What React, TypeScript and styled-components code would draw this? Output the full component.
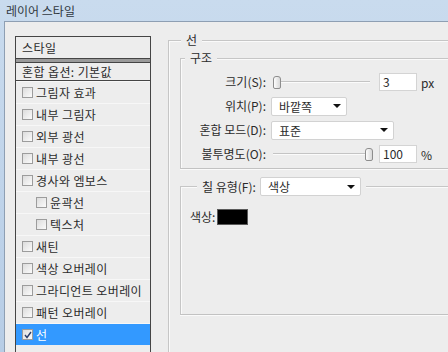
import React from 'react';
import styled, { createGlobalStyle } from 'styled-components';

const FONT = '"Noto Sans CJK KR", "Noto Sans", sans-serif';

const GlobalStyle = createGlobalStyle`
  html, body { margin: 0; padding: 0; background: #ededed; }
  body { font-family: ${FONT}; font-size: 12px; color: #2b2b2b; }
`;

const Window = styled.div`
  width: 448px;
  height: 352px;
  overflow: hidden;
  background: linear-gradient(to bottom, #c9dbee, #b7cde6);
  display: flex;
  flex-direction: column;
`;

const TitleBar = styled.div`
  height: 21px;
  flex: none;
  display: flex;
  align-items: center;
  padding-left: 6px;
  font-size: 12px;
  color: #303840;
`;

const Body = styled.div`
  flex: 1;
  margin-left: 4px;
  background: #ededed;
  border-left: 1px solid #8e9fb3;
  border-top: 1px solid #8e9fb3;
  display: flex;
  padding: 14px 0 0 10px;
  min-height: 0;
`;

const StyleList = styled.div`
  width: 134px;
  flex: none;
  border: 1px solid #454545;
  border-bottom: none;
  background: #ededed;
  display: flex;
  flex-direction: column;
  letter-spacing: 0.4px;
`;

const ListHeader = styled.div`
  height: 21px;
  display: flex;
  align-items: center;
  padding-left: 6px;
  border-bottom: 1px solid #454545;
`;

const ListBar = styled.div`
  height: 3px;
  background: #9a9a9a;
  border-bottom: 1px solid #454545;
`;

const BlendRow = styled.div`
  height: 17px;
  display: flex;
  align-items: center;
  padding-left: 6px;
  border-bottom: 1px solid #454545;
`;

const Item = styled.div<{ $indent?: boolean; $selected?: boolean }>`
  height: 21px;
  display: flex;
  align-items: center;
  gap: 3px;
  padding-left: ${p => (p.$indent ? 20 : 6)}px;
  border-top: 1px solid #f7f7f7;
  background: ${p => (p.$selected ? '#3399ff' : 'transparent')};
  color: ${p => (p.$selected ? '#ffffff' : '#2b2b2b')};
`;

const Check = styled.span`
  width: 9px;
  height: 9px;
  flex: none;
  border: 1px solid #9c9c9c;
  background: linear-gradient(135deg, #dcdcdc, #fbfbfb);
  display: flex;
  align-items: center;
  justify-content: center;
`;

const Panel = styled.div`
  margin-left: 17px;
  width: 320px;
  flex: none;
`;

// etched group box: grey line with a white line beside it, caption sits on the top line
const OuterGroup = styled.div`
  margin-top: 4px;
  height: 330px;
  padding-left: 11px;
  border-top: 1px solid #c6c6c6;
  border-left: 1px solid #c6c6c6;
  box-shadow: inset 1px 1px 0 #fafafa;
`;

const BoxGroup = styled.div`
  padding-left: 11px;
  border-top: 1px solid #c6c6c6;
  border-left: 1px solid #c6c6c6;
  border-bottom: 1px solid #c2c2c2;
  box-shadow: inset 1px 1px 0 #fafafa, 0 1px 0 #fafafa;
`;

const StructGroup = styled(BoxGroup)`
  margin-top: 11px;
  padding-bottom: 4px;
`;

const FillGroup = styled(BoxGroup)`
  margin-top: 17px;
  padding-bottom: 89px;
`;

const Caption = styled.div<{ $x: number; $tall?: boolean }>`
  width: fit-content;
  display: flex;
  align-items: center;
  gap: 4px;
  padding: 0 5px;
  background: #ededed;
  line-height: ${p => (p.$tall ? 19 : 14)}px;
  margin: ${p => (p.$tall ? -10 : -8)}px 0 0 ${p => p.$x}px;
`;

const FormGrid = styled.div`
  display: grid;
  grid-template-columns: 74px auto;
  row-gap: 4px;
  column-gap: 5px;
  padding-top: 7px;
  align-items: center;
`;

const Label = styled.label`
  text-align: right;
  white-space: nowrap;
  line-height: 20px;
`;

const Controls = styled.div`
  display: flex;
  align-items: center;
  height: 20px;
`;

const Slider = styled.div`
  position: relative;
  width: 97px;
  height: 13px;
  margin-left: 2px;
  display: flex;
  align-items: center;
`;

const Track = styled.div`
  width: 100%;
  height: 1px;
  background: #c4c4c4;
  border-bottom: 1px solid #fbfbfb;
`;

const Thumb = styled.div<{ $pos: 'start' | 'end' }>`
  position: absolute;
  top: 0;
  ${p => (p.$pos === 'start' ? 'left: 0;' : 'right: -3px;')}
  width: 6px;
  height: 11px;
  border: 1px solid #8d8d8d;
  border-radius: 3px 3px 2px 2px;
  background: linear-gradient(to right, #fdfdfd, #d8d8d8);
`;

const NumBox = styled.div`
  width: 33px;
  height: 16px;
  margin-left: 9px;
  background: #fff;
  border: 1px solid #d4d4d4;
  display: flex;
  align-items: center;
  padding-left: 3px;
  box-sizing: content-box;
  line-height: 16px;
`;

const Unit = styled.span`
  margin-left: 4px;
`;

const Select = styled.div<{ $w: number }>`
  width: ${p => p.$w}px;
  height: 19px;
  box-sizing: border-box;
  background: #fff;
  border: 1px solid #d2d2d2;
  border-radius: 2px;
  display: flex;
  align-items: center;
  justify-content: space-between;
  padding: 0 5px 0 7px;
`;

const Arrow = styled.span`
  width: 0;
  height: 0;
  border-left: 4px solid transparent;
  border-right: 4px solid transparent;
  border-top: 4px solid #111;
`;

const ColorRow = styled.div`
  display: flex;
  align-items: center;
  gap: 2px;
  padding-top: 12px;
  margin-left: -2px;
`;

const Swatch = styled.div`
  width: 29px;
  height: 14px;
  background: #000;
  border: 1px solid #5a5a5a;
`;

const items: { name: string; indent?: boolean; selected?: boolean }[] = [
  { name: '그림자 효과' },
  { name: '내부 그림자' },
  { name: '외부 광선' },
  { name: '내부 광선' },
  { name: '경사와 엠보스' },
  { name: '윤곽선', indent: true },
  { name: '텍스처', indent: true },
  { name: '새틴' },
  { name: '색상 오버레이' },
  { name: '그라디언트 오버레이' },
  { name: '패턴 오버레이' },
  { name: '선', selected: true },
];

const CheckMark = () => (
  <svg width="8" height="8" viewBox="0 0 8 8">
    <path d="M1 4 L3 6.5 L7 1" fill="none" stroke="#2c3e6b" strokeWidth="1.4" />
  </svg>
);

export default function App() {
  return (
    <>
      <GlobalStyle />
      <Window>
        <TitleBar>레이어 스타일</TitleBar>
        <Body>
          <StyleList>
            <ListHeader>스타일</ListHeader>
            <ListBar />
            <BlendRow>혼합 옵션: 기본값</BlendRow>
            {items.map(it => (
              <Item key={it.name} $indent={it.indent} $selected={it.selected}>
                <Check>{it.selected && <CheckMark />}</Check>
                <span>{it.name}</span>
              </Item>
            ))}
          </StyleList>
          <Panel>
            <OuterGroup>
              <Caption $x={1}>선</Caption>
              <StructGroup>
                <Caption $x={-7}>구조</Caption>
                <FormGrid>
                  <Label>크기(S):</Label>
                  <Controls>
                    <Slider><Track /><Thumb $pos="start" /></Slider>
                    <NumBox>3</NumBox>
                    <Unit>px</Unit>
                  </Controls>
                  <Label>위치(P):</Label>
                  <Controls>
                    <Select $w={76}>바깥쪽<Arrow /></Select>
                  </Controls>
                  <Label>혼합 모드(D):</Label>
                  <Controls>
                    <Select $w={123}>표준<Arrow /></Select>
                  </Controls>
                  <Label>불투명도(O):</Label>
                  <Controls>
                    <Slider><Track /><Thumb $pos="end" /></Slider>
                    <NumBox>100</NumBox>
                    <Unit>%</Unit>
                  </Controls>
                </FormGrid>
              </StructGroup>
              <FillGroup>
                <Caption $x={5} $tall>
                  칠 유형(F):
                  <Select $w={101}>색상<Arrow /></Select>
                </Caption>
                <ColorRow>
                  색상:
                  <Swatch />
                </ColorRow>
              </FillGroup>
            </OuterGroup>
          </Panel>
        </Body>
      </Window>
    </>
  );
}
